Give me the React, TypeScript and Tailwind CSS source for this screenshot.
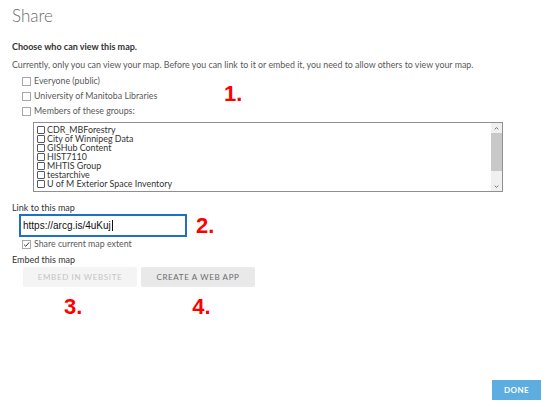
const groups = [
  'CDR_MBForestry',
  'City of Winnipeg Data',
  'GISHub Content',
  'HIST7110',
  'MHTIS Group',
  'testarchive',
  'U of M Exterior Space Inventory',
]

function Box({ checked = false }: { checked?: boolean }) {
  return (
    <span className="inline-flex h-[9px] w-[9px] shrink-0 items-center justify-center border border-[#a8a8a8] bg-white">
      {checked && (
        <svg viewBox="0 0 10 10" className="h-[7px] w-[7px]">
          <path d="M1.5 5.2 L4 7.6 L8.6 2.2" fill="none" stroke="#333" strokeWidth="1.4" />
        </svg>
      )}
    </span>
  )
}

function Marker({ children }: { children: string }) {
  return (
    <span className="font-['Liberation_Sans',sans-serif] text-[22px] leading-none font-bold text-[#ff0000]">
      {children}
    </span>
  )
}

export default function App() {
  return (
    <div className="relative h-[407px] w-[550px] overflow-hidden bg-white font-['Lato',sans-serif] text-[#4c4c4c]">
      <div className="px-3 pt-[5px]">
        <h1 className="text-[17px] leading-[22px] font-light text-[#6b6b6b]">Share</h1>

        <p className="mt-[14px] text-[9px] leading-[12px] font-bold text-[#333]">Choose who can view this map.</p>
        <p className="mt-[6px] text-[8.85px] leading-[12px] text-[#595959]">
          Currently, only you can view your map. Before you can link to it or embed it, you need to allow others to view your map.
        </p>

        <div className="relative mt-[4px] flex flex-col gap-[3px] pl-[10px] text-[8.8px] leading-[12px] text-[#595959]">
          <label className="flex items-center gap-[3px]"><Box />Everyone (public)</label>
          <label className="flex items-center gap-[3px]"><Box />University of Manitoba Libraries</label>
          <label className="flex items-center gap-[3px]"><Box />Members of these groups:</label>
          <span className="absolute top-[8px] left-[212px]"><Marker>1.</Marker></span>
        </div>

        <div className="mt-[5px] ml-[21px] flex h-[70px] w-[470px] border border-[#8f8f8f]">
          <ul className="flex-1 pt-[2px] pl-[3px] font-['Lato',sans-serif] text-[8.9px] leading-[9px] text-[#333]">
            {groups.map((g) => (
              <li key={g} className="flex h-[9px] items-center gap-[2px]">
                <span className="h-[8px] w-[8px] shrink-0 rounded-[1px] border border-[#555a66]" />
                {g}
              </li>
            ))}
          </ul>
          <div className="flex w-[11px] flex-col bg-[#f0f0f0]">
            <span className="flex h-[10px] items-center justify-center">
              <svg viewBox="0 0 8 5" className="h-[3px] w-[5px]"><path d="M1 4 L4 1 L7 4" fill="none" stroke="#505050" strokeWidth="1.3" /></svg>
            </span>
            <span className="h-[38px] bg-[#c8c8c8]" />
            <span className="flex-1" />
            <span className="flex h-[10px] items-center justify-center">
              <svg viewBox="0 0 8 5" className="h-[3px] w-[5px]"><path d="M1 1 L4 4 L7 1" fill="none" stroke="#505050" strokeWidth="1.3" /></svg>
            </span>
          </div>
        </div>

        <p className="mt-[10px] text-[9px] leading-[12px] text-[#333]">Link to this map</p>
        <div className="flex items-center gap-[9px]">
          <div className="ml-[7px] flex h-[23px] w-[168px] items-center border-2 border-[#1f6fc5] px-[2px] font-['Liberation_Sans',sans-serif] text-[10px] text-[#111]">
            https://arcg.is/4uKuj<span className="ml-px h-[11px] w-px bg-[#111]" />
          </div>
          <Marker>2.</Marker>
        </div>

        <label className="mt-px ml-[10px] flex items-center gap-[3px] text-[8.8px] leading-[12px] text-[#595959]">
          <Box checked />Share current map extent
        </label>

        <p className="mt-[4px] text-[9px] leading-[12px] text-[#333]">Embed this map</p>
        <div className="mt-[1px] ml-[11px] flex gap-[4px]">
          <button className="h-[20px] w-[114px] rounded-[2px] bg-[#f4f4f4] text-[8px] tracking-[0.08em] text-[#c4c4c4]">EMBED IN WEBSITE</button>
          <button className="h-[20px] w-[114px] rounded-[2px] bg-[#e9e9e9] text-[8px] tracking-[0.08em] text-[#6b6b6b]">CREATE A WEB APP</button>
        </div>
        <div className="mt-[9px] flex">
          <span className="ml-[52px]"><Marker>3.</Marker></span>
          <span className="ml-[110px]"><Marker>4.</Marker></span>
        </div>
      </div>

      <div className="absolute right-[9px] bottom-[7px]">
        <button className="h-[20px] w-[49px] bg-[#5dade0] text-[8px] font-bold tracking-[0.06em] text-white">DONE</button>
      </div>
    </div>
  )
}
